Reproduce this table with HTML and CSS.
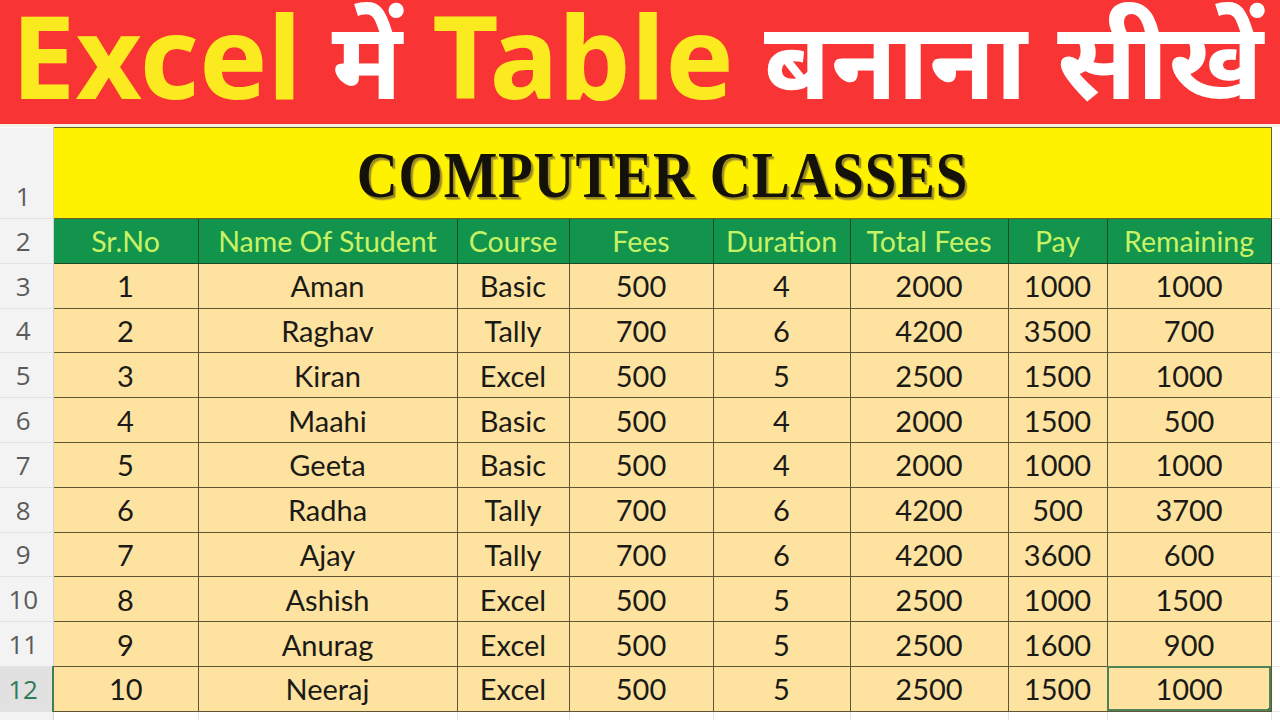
FILE: index.html
```html
<!DOCTYPE html>
<html>
<head>
<meta charset="utf-8">
<link rel="stylesheet" href="styles.css">
</head>
<body>
<div class="banner">
  <span class="y">Excel</span>
  <span class="w">में</span>
  <span class="y">Table</span>
  <span class="w">बनाना</span>
  <span class="w">सीखें</span>
</div>
<table class="sheet">
  <colgroup>
    <col class="c-rh"><col class="c-a"><col class="c-b"><col class="c-c"><col class="c-d"><col class="c-e"><col class="c-f"><col class="c-g"><col class="c-h"><col class="c-x">
  </colgroup>
  <tr class="r-title">
    <td class="rh rh-bottom">1</td>
    <td class="title" colspan="8"><span class="title-text">COMPUTER CLASSES</span></td>
    <td class="ex"></td>
  </tr>
  <tr class="r-row">
    <td class="rh">2</td>
    <td class="hd">Sr.No</td><td class="hd">Name Of Student</td><td class="hd">Course</td><td class="hd">Fees</td><td class="hd">Duration</td><td class="hd">Total Fees</td><td class="hd">Pay</td><td class="hd">Remaining</td>
    <td class="ex"></td>
  </tr>
  <tr class="r-row"><td class="rh">3</td><td class="d">1</td><td class="d">Aman</td><td class="d">Basic</td><td class="d">500</td><td class="d">4</td><td class="d">2000</td><td class="d">1000</td><td class="d">1000</td><td class="ex"></td></tr>
  <tr class="r-row"><td class="rh">4</td><td class="d">2</td><td class="d">Raghav</td><td class="d">Tally</td><td class="d">700</td><td class="d">6</td><td class="d">4200</td><td class="d">3500</td><td class="d">700</td><td class="ex"></td></tr>
  <tr class="r-row"><td class="rh">5</td><td class="d">3</td><td class="d">Kiran</td><td class="d">Excel</td><td class="d">500</td><td class="d">5</td><td class="d">2500</td><td class="d">1500</td><td class="d">1000</td><td class="ex"></td></tr>
  <tr class="r-row"><td class="rh">6</td><td class="d">4</td><td class="d">Maahi</td><td class="d">Basic</td><td class="d">500</td><td class="d">4</td><td class="d">2000</td><td class="d">1500</td><td class="d">500</td><td class="ex"></td></tr>
  <tr class="r-row"><td class="rh">7</td><td class="d">5</td><td class="d">Geeta</td><td class="d">Basic</td><td class="d">500</td><td class="d">4</td><td class="d">2000</td><td class="d">1000</td><td class="d">1000</td><td class="ex"></td></tr>
  <tr class="r-row"><td class="rh">8</td><td class="d">6</td><td class="d">Radha</td><td class="d">Tally</td><td class="d">700</td><td class="d">6</td><td class="d">4200</td><td class="d">500</td><td class="d">3700</td><td class="ex"></td></tr>
  <tr class="r-row"><td class="rh">9</td><td class="d">7</td><td class="d">Ajay</td><td class="d">Tally</td><td class="d">700</td><td class="d">6</td><td class="d">4200</td><td class="d">3600</td><td class="d">600</td><td class="ex"></td></tr>
  <tr class="r-row"><td class="rh">10</td><td class="d">8</td><td class="d">Ashish</td><td class="d">Excel</td><td class="d">500</td><td class="d">5</td><td class="d">2500</td><td class="d">1000</td><td class="d">1500</td><td class="ex"></td></tr>
  <tr class="r-row"><td class="rh">11</td><td class="d">9</td><td class="d">Anurag</td><td class="d">Excel</td><td class="d">500</td><td class="d">5</td><td class="d">2500</td><td class="d">1600</td><td class="d">900</td><td class="ex"></td></tr>
  <tr class="r-row"><td class="rh rh-sel">12</td><td class="d">10</td><td class="d">Neeraj</td><td class="d">Excel</td><td class="d">500</td><td class="d">5</td><td class="d">2500</td><td class="d">1500</td><td class="d sel">1000<span class="handle"></span></td><td class="ex"></td></tr>
  <tr class="r-empty"><td class="rh"></td><td class="e"></td><td class="e"></td><td class="e"></td><td class="e"></td><td class="e"></td><td class="e"></td><td class="e"></td><td class="e"></td><td class="ex"></td></tr>
</table>
</body>
</html>
```

FILE: styles.css
```css
html, body {
  margin: 0;
  padding: 0;
  background: #ffffff;
  width: 1280px;
  height: 720px;
  overflow: hidden;
}

.banner {
  height: 124px;
  background: #f93434;
  display: flex;
  align-items: baseline;
  gap: 30px;
  padding: 0 0 0 11px;
  font-family: "Noto Sans", "Noto Sans Devanagari", "Open Sans", sans-serif;
  font-weight: 700;
  white-space: nowrap;
  border-bottom: 3px solid #f3f0e4;
}

.banner span {
  line-height: 110px;
}

.banner .y {
  color: #fbea1f;
  font-size: 115px;
}

.banner .w {
  color: #ffffff;
  font-size: 108px;
}

.sheet {
  table-layout: fixed;
  border-collapse: collapse;
  width: 1280px;
  font-family: Lato, "Open Sans", sans-serif;
}

.c-rh { width: 53px; }
.c-a { width: 145px; }
.c-b { width: 259px; }
.c-c { width: 112px; }
.c-d { width: 144px; }
.c-e { width: 137px; }
.c-f { width: 158px; }
.c-g { width: 99px; }
.c-h { width: 164px; }
.c-x { width: 9px; }

.sheet td {
  padding: 0;
  text-align: center;
  vertical-align: middle;
  overflow: hidden;
  white-space: nowrap;
}

.r-title { height: 91px; }
.r-row { height: 44.8px; }
.r-empty { height: 12px; }

.rh {
  background: #f3f3f3;
  color: #5b5b5b;
  font-family: "Open Sans", sans-serif;
  font-size: 26px;
  border-right: 1px solid #d2d2d2;
  border-bottom: 1px solid #e2e2e2;
  padding-right: 6px !important;
}

.rh-bottom {
  vertical-align: bottom !important;
  padding-bottom: 4px !important;
}

.rh-sel {
  background: #e1e1e1;
  color: #2f7a5b;
  border-right: 2px solid #3e7d55;
}

.title {
  background: #fff200;
  border: 1px solid #6a6220;
}

.title-text {
  display: inline-block;
  font-family: "Liberation Serif", serif;
  font-weight: 700;
  font-size: 66px;
  color: #14110a;
  transform: scaleX(0.86);
  letter-spacing: 1px;
  text-shadow: 2px 2px 0 #9b8c1c, 3px 3px 1px #c2b02a;
  margin-top: 4px;
}

.hd {
  background: #12944c;
  color: #c8f266;
  font-size: 28.5px;
  border: 1px solid #1d4a2a;
}

.d {
  background: #fde39f;
  color: #1b1a16;
  font-size: 29px;
  border: 1px solid #5e5634;
}

.sel {
  position: relative;
  outline: 2px solid #4c8358;
  outline-offset: -2px;
}

.handle {
  position: absolute;
  right: -3px;
  bottom: -3px;
  width: 6px;
  height: 6px;
  background: #3e7d55;
}

.e {
  border-right: 1px solid #e4e4e4;
}

.ex {
  border-bottom: 1px solid #e8e8e8;
}
```
